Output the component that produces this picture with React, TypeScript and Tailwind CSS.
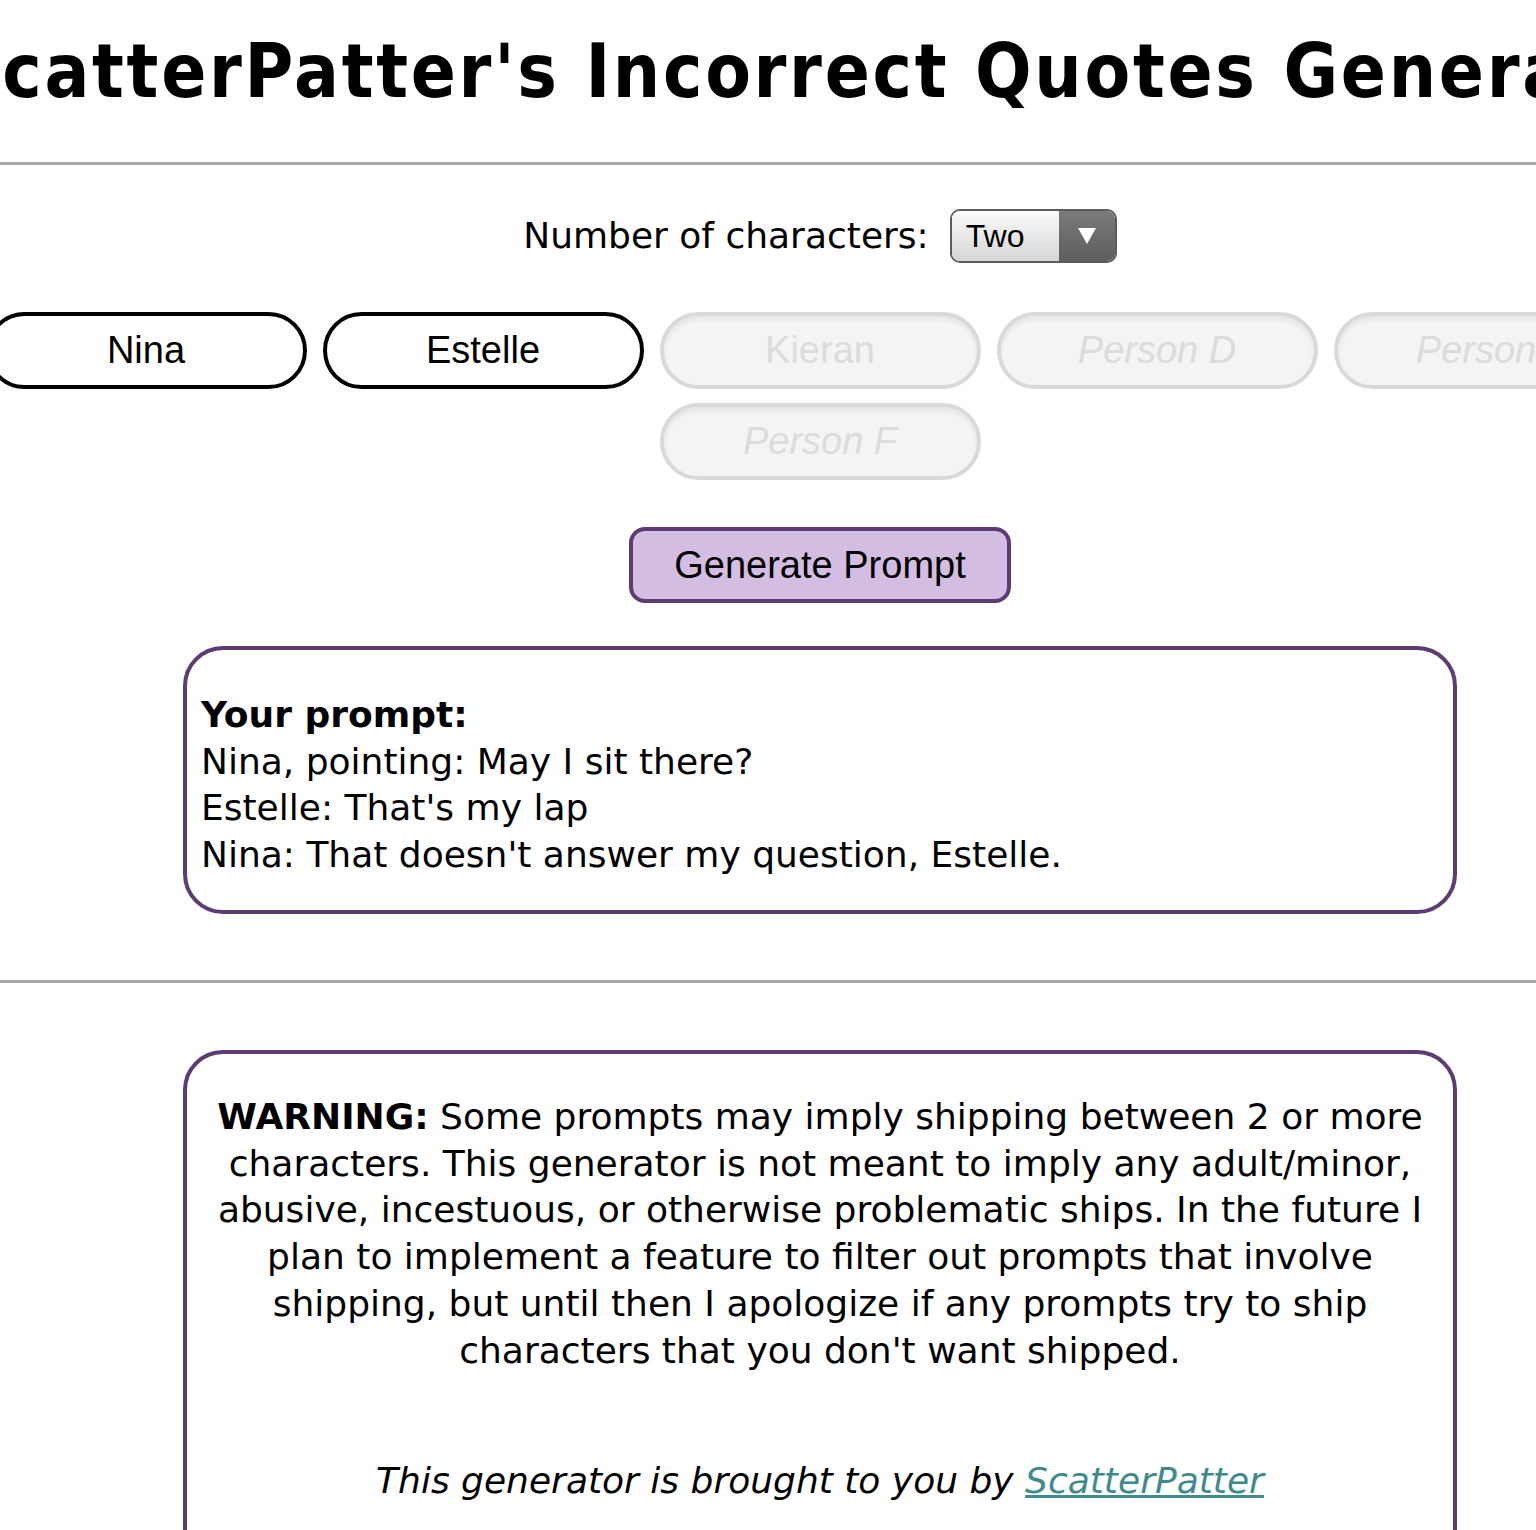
import React from "react";

const verdana = { fontFamily: '"DejaVu Sans", Verdana, sans-serif' };
const titleFont = { fontFamily: '"DejaVu Sans Condensed", "DejaVu Sans", sans-serif', fontStretch: "condensed" as const };
const helv = { fontFamily: '"Liberation Sans Narrow", "Liberation Sans", Arial, sans-serif' };

function CharButton({ label, active, italic }: { label: string; active?: boolean; italic?: boolean }) {
  return (
    <div
      style={helv}
      className={
        "w-[321px] h-[77px] rounded-full border-[4px] flex items-center justify-center text-[38px] " +
        (active
          ? "border-black bg-white text-black"
          : "border-[#d9d9d9] bg-[#f4f4f4] text-[#dcdcdc] shadow-[inset_0_4px_4px_rgba(0,0,0,0.06)]") +
        (italic ? " italic" : "")
      }
    >
      {label}
    </div>
  );
}

export default function App() {
  return (
    <div className="w-[1536px] overflow-hidden bg-white text-black">
      <div className="w-[1640px] flex flex-col items-center" style={verdana}>
        <div className="w-full flex justify-center overflow-visible">
          <h1
            style={titleFont}
            className="shrink-0 text-center font-bold text-[74px] leading-none pt-[34px] pb-[54px] whitespace-nowrap tracking-[2.7px]"
          >
            ScatterPatter's Incorrect Quotes Generator
          </h1>
        </div>
        <div className="w-full h-[3px] bg-[#a9a9a9]" />

        <div className="flex items-center mt-[44px] gap-[21px]">
          <span className="text-[36px] leading-none">Number of characters:</span>
          <div className="w-[167px] h-[54px] rounded-[10px] border-[2px] border-[#5c5c5c] flex overflow-hidden">
            <div
              className="flex-1 bg-gradient-to-b from-[#fafafa] to-[#d6d6d6] flex items-center pl-[14px] text-[32px]"
              style={helv}
            >
              Two
            </div>
            <div className="w-[56px] bg-gradient-to-b from-[#7a7a7a] to-[#5e5e5e] flex items-center justify-center">
              <svg width="20" height="18" viewBox="0 0 20 18">
                <path d="M1 1 L19 1 L10 17 Z" fill="white" />
              </svg>
            </div>
          </div>
        </div>

        <div className="flex flex-wrap justify-center gap-x-[16px] gap-y-[14px] w-[1680px] mt-[49px]">
          <CharButton label="Nina" active />
          <CharButton label="Estelle" active />
          <CharButton label="Kieran" />
          <CharButton label="Person D" italic />
          <CharButton label="Person E" italic />
          <CharButton label="Person F" italic />
        </div>

        <div
          style={helv}
          className="mt-[47px] w-[382px] h-[76px] rounded-[16px] border-[4px] border-[#5d3b74] bg-[#d3bde1] flex items-center justify-center text-[38px]"
        >
          Generate Prompt
        </div>

        <div className="mt-[43px] w-[1274px] h-[268px] rounded-[40px] border-[4px] border-[#5d3b74] pl-[14px] pt-[42px] text-[36px] leading-[46.5px]">
          <div className="font-bold">Your prompt:</div>
          <div>Nina, pointing: May I sit there?</div>
          <div>Estelle: That's my lap</div>
          <div>Nina: That doesn't answer my question, Estelle.</div>
        </div>

        <div className="w-full h-[3px] bg-[#a9a9a9] mt-[66px]" />

        <div className="mt-[67px] w-[1274px] h-[520px] rounded-[40px] border-[4px] border-[#5d3b74] px-[18px] pt-[40px] text-center text-[36px] leading-[46.7px]">
          <p>
            <b>WARNING:</b> Some prompts may imply shipping between 2 or more characters. This generator is not meant
            to imply any adult/minor, abusive, incestuous, or otherwise problematic ships. In the future I plan to
            implement a feature to filter out prompts that involve shipping, but until then I apologize if any prompts
            try to ship characters that you don't want shipped.
          </p>
          <p className="mt-[84px] italic">
            This generator is brought to you by{" "}
            <a className="text-[#3f8a8c] underline">ScatterPatter</a>
          </p>
        </div>
      </div>
    </div>
  );
}
